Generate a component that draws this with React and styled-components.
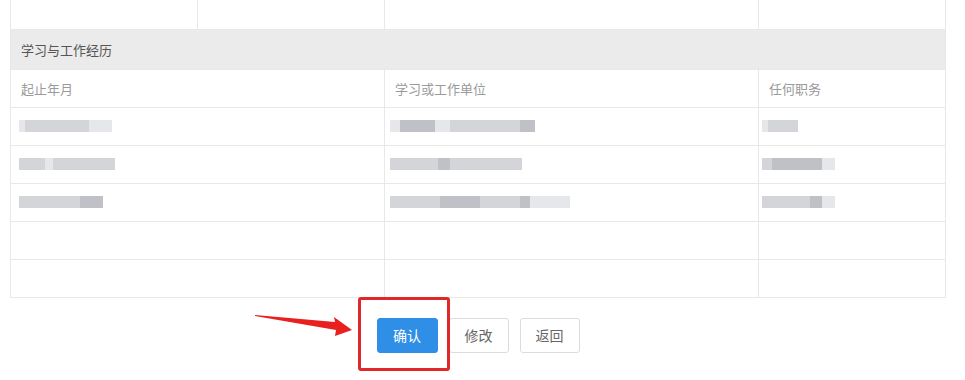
import React from 'react'
import styled, { createGlobalStyle } from 'styled-components'

const GlobalStyle = createGlobalStyle`
  body {
    margin: 0;
    background: #fff;
    font-family: "Noto Sans CJK SC", "Noto Sans", sans-serif;
  }
`

const Page = styled.div`
  width: 965px;
  height: 380px;
  overflow: hidden;
  padding: 0 19px 0 10px;
  box-sizing: border-box;
`

const Table = styled.table`
  width: 100%;
  border-collapse: collapse;
  table-layout: fixed;
  font-size: 13px;
`

const Cell = styled.td`
  border: 1px solid #e8e8e8;
  border-top: ${ p => p.$noTop ? 'none' : '1px solid #e8e8e8' };
  height: ${ p => p.$h || 38 }px;
  padding: 0 10px;
  box-sizing: border-box;
  vertical-align: middle;
  color: ${ p => p.$label ? '#9a9a9a' : '#555' };
`

const SectionCell = styled.td`
  border: 1px solid #e8e8e8;
  background: #ebebeb;
  height: 39px;
  padding: 0 10px;
  color: #555;
`

const Smudge = styled.span`
  display: flex;
  margin-left: ${ p => p.$offset || 0 }px;
  filter: blur(0.7px);
`

const Blot = styled.span`
  display: block;
  height: ${ p => p.$h || 12 }px;
  width: ${ p => p.$w }px;
  background: ${ p => p.$c };
`

const Bar = styled.div`
  display: flex;
  justify-content: center;
  gap: 11px;
  margin-top: 20px;
`

const Button = styled.button`
  width: ${ p => p.$primary ? 61 : 60 }px;
  height: 35px;
  border-radius: 3px;
  border: 1px solid ${ p => p.$primary ? '#2f8ee6' : '#dcdcdc' };
  background: ${ p => p.$primary ? '#2f8ee6' : '#fff' };
  color: ${ p => p.$primary ? '#fff' : '#666' };
  font-family: inherit;
  font-size: 14px;
  padding: 0;
`

const Marked = styled.div`
  position: relative;
  display: flex;
`

const Frame = styled.span`
  position: absolute;
  top: -21px;
  left: -19px;
  right: -12px;
  bottom: -18px;
  border: 3px solid #e0282b;
  border-radius: 3px;
  pointer-events: none;
`

const Arrow = styled.svg`
  position: absolute;
  left: -122px;
  top: -4px;
  overflow: visible;
`

const light = '#e6e7ea'
const mid = '#d3d5d9'
const dark = '#bfc1c6'

const rows = [
  [
    [[6, light], [64, mid], [23, light]],
    [[10, light], [35, dark], [15, light], [70, mid], [15, dark]],
    [[6, light], [30, mid]],
  ],
  [
    [[26, mid], [8, light], [62, mid]],
    [[48, mid], [12, dark], [72, mid]],
    [[10, mid], [50, dark], [13, light]],
  ],
  [
    [[61, mid], [23, dark]],
    [[50, mid], [40, dark], [40, mid], [10, dark], [40, light]],
    [[48, mid], [12, dark], [13, light]],
  ],
]

const offsets = [ -2, -5, -7 ]

const Blur = ( { parts, offset } ) =>
  <Smudge $offset={ offset }>
    { parts.map( ( [ w, c ], i ) => <Blot key={ i } $w={ w } $c={ c } /> ) }
  </Smudge>

export default function App() {
  return (
    <Page>
      <GlobalStyle />
      <Table>
        <colgroup>
          <col /><col /><col /><col /><col />
        </colgroup>
        <tbody>
          <tr>
            <Cell $noTop $h={ 29 } />
            <Cell $noTop $h={ 29 } />
            <Cell $noTop $h={ 29 } colSpan={ 2 } />
            <Cell $noTop $h={ 29 } />
          </tr>
          <tr>
            <SectionCell colSpan={ 5 }>学习与工作经历</SectionCell>
          </tr>
          <tr>
            <Cell $label colSpan={ 2 }>起止年月</Cell>
            <Cell $label colSpan={ 2 }>学习或工作单位</Cell>
            <Cell $label>任何职务</Cell>
          </tr>
          { rows.map( ( r, i ) =>
            <tr key={ i }>
              <Cell colSpan={ 2 }><Blur parts={ r[0] } offset={ offsets[0] } /></Cell>
              <Cell colSpan={ 2 }><Blur parts={ r[1] } offset={ offsets[1] } /></Cell>
              <Cell><Blur parts={ r[2] } offset={ offsets[2] } /></Cell>
            </tr>
          ) }
          <tr>
            <Cell colSpan={ 2 } /><Cell colSpan={ 2 } /><Cell />
          </tr>
          <tr>
            <Cell colSpan={ 2 } /><Cell colSpan={ 2 } /><Cell />
          </tr>
        </tbody>
      </Table>
      <Bar>
        <Marked>
          <Arrow width="100" height="24" viewBox="0 0 100 24">
            <polygon points="0,1 80,8 79,3 97,16 80,22 81,16 0,2" fill="#e8201f" />
          </Arrow>
          <Button $primary>确认</Button>
          <Frame />
        </Marked>
        <Button>修改</Button>
        <Button>返回</Button>
      </Bar>
    </Page>
  )
}
